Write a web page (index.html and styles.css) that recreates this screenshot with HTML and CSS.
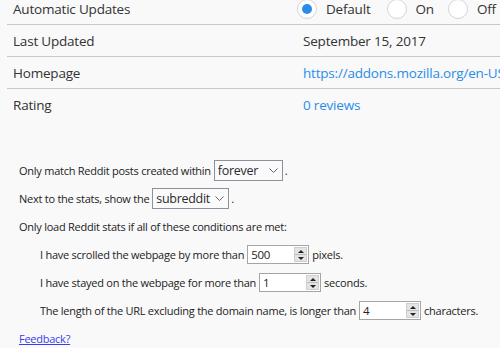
FILE: index.html
```html
<!DOCTYPE html>
<html>
<head>
<meta charset="utf-8">
<link rel="stylesheet" href="styles.css">
</head>
<body>
<div class="details">
  <div class="row">
    <div class="label">Automatic Updates</div>
    <div class="value radios">
      <span class="radio checked"></span><span class="rlabel">Default</span>
      <span class="radio"></span><span class="rlabel short">On</span>
      <span class="radio"></span><span class="rlabel">Off</span>
    </div>
  </div>
  <div class="row">
    <div class="label">Last Updated</div>
    <div class="value text">September 15, 2017</div>
  </div>
  <div class="row">
    <div class="label">Homepage</div>
    <div class="value text"><a class="blue" href="#">https://addons.mozilla.org/en-US/firefox/addon/reddit-stats/</a></div>
  </div>
  <div class="row last">
    <div class="label">Rating</div>
    <div class="value text"><a class="blue" href="#">0 reviews</a></div>
  </div>
</div>

<div class="options">
  <div class="opt">Only match Reddit posts created within <span class="select w-forever"><span class="stext">forever</span><svg class="chev" width="9" height="5" viewBox="0 0 9 5"><path d="M0.5 0.5 L4.5 4.5 L8.5 0.5" fill="none" stroke="#666" stroke-width="1"/></svg></span>.</div>
  <div class="opt">Next to the stats, show the <span class="select w-sub"><span class="stext">subreddit</span><svg class="chev" width="9" height="5" viewBox="0 0 9 5"><path d="M0.5 0.5 L4.5 4.5 L8.5 0.5" fill="none" stroke="#666" stroke-width="1"/></svg></span>.</div>
  <div class="opt">Only load Reddit stats if all of these conditions are met:</div>
  <div class="opt sub">I have scrolled the webpage by more than <span class="spin"><span class="val">500</span><span class="arrows"><span class="up"></span><span class="down"></span></span></span> pixels.</div>
  <div class="opt sub">I have stayed on the webpage for more than <span class="spin"><span class="val">1</span><span class="arrows"><span class="up"></span><span class="down"></span></span></span> seconds.</div>
  <div class="opt sub">The length of the URL excluding the domain name, is longer than <span class="spin"><span class="val">4</span><span class="arrows"><span class="up"></span><span class="down"></span></span></span> characters.</div>
  <div class="opt"><a class="feedback" href="#">Feedback?</a></div>
</div>
</body>
</html>
```

FILE: styles.css
```css
html, body {
  margin: 0;
  padding: 0;
  background: #f9f9fa;
  overflow: hidden;
}
body {
  width: 500px;
  height: 348px;
  font-family: "Open Sans", "Noto Sans", sans-serif;
  color: #333;
}
.details {
  margin-top: -7px;
  margin-left: 7px;
  width: 600px;
}
.row {
  display: grid;
  grid-template-columns: 290px 1fr;
  height: 31px;
  border-bottom: 1px solid #c8c8cc;
  align-items: center;
  font-size: 13.5px;
  letter-spacing: -0.2px;
  color: #333;
}
.row.last { border-bottom: none; }
.label { padding-left: 6px; }
.value.text { padding-left: 6px; white-space: nowrap; }
.blue { color: #2a8ce8; text-decoration: none; }
.radios {
  display: flex;
  align-items: center;
  white-space: nowrap;
}
.radio {
  width: 20px;
  height: 20px;
  border: 1px solid #d4d4d8;
  border-radius: 50%;
  background: #fff;
  box-sizing: border-box;
  position: relative;
  flex: none;
}
.radio.checked::after {
  content: "";
  position: absolute;
  left: 4px;
  top: 4px;
  width: 10px;
  height: 10px;
  border-radius: 50%;
  background: #2a8ce8;
}
.rlabel { margin-left: 9px; margin-right: 16px; }
.rlabel.short { margin-right: 14px; }

.options {
  margin-top: 36px;
  padding-left: 19px;
  font-size: 11px;
  letter-spacing: -0.25px;
  color: #222;
}
.opt {
  height: 28px;
  display: flex;
  align-items: center;
  white-space: nowrap;
}
.opt.sub { padding-left: 21px; }
.select {
  display: inline-flex;
  align-items: center;
  box-sizing: border-box;
  height: 21px;
  margin-left: 3px;
  margin-right: 2px;
  padding: 0 4px 0 3px;
  border: 1px solid #8f8f9d;
  background: #fafafa;
  font-size: 12.5px;
  letter-spacing: -0.3px;
  color: #2a2a2e;
}
.stext { flex: 1; overflow: hidden; }
.w-forever { width: 69px; }
.w-sub { width: 77px; }
.chev { margin-top: 1px; flex: none; }
.spin {
  display: inline-flex;
  box-sizing: border-box;
  height: 19px;
  width: 62px;
  margin: 0 3px 0 3px;
  border: 1px solid #a5a5a5;
  background: #fff;
  align-items: stretch;
}
.val {
  flex: 1;
  padding-left: 3px;
  line-height: 17px;
  font-size: 11.5px;
}
.arrows {
  width: 13px;
  margin: 1px;
  display: flex;
  flex-direction: column;
  background: #e4e4e4;
  border: 1px solid #cfcfcf;
  box-sizing: border-box;
}
.up, .down {
  flex: 1;
  position: relative;
}
.down { border-top: 1px solid #bdbdbd; }
.up::after, .down::after {
  content: "";
  position: absolute;
  left: 3px;
  width: 0;
  height: 0;
  border-left: 3px solid transparent;
  border-right: 3px solid transparent;
}
.up::after { top: 2px; border-bottom: 3px solid #222; }
.down::after { top: 2px; border-top: 3px solid #222; }
.feedback {
  color: #3b3bef;
  text-decoration: underline;
}
```
